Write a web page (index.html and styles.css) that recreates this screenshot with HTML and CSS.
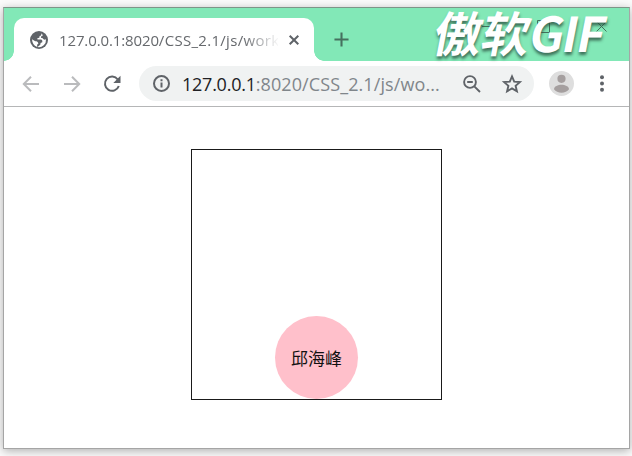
FILE: index.html
```html
<!DOCTYPE html>
<html lang="zh-CN">
<head>
<meta charset="utf-8">
<title>127.0.0.1:8020</title>
<link rel="stylesheet" href="styles.css">
</head>
<body>
<div class="window">
  <header class="tabs">
    <div class="tab">
      <svg class="globe" viewBox="0 0 18 18"><circle cx="9" cy="9" r="9" fill="#5f6368"/><path d="M11.200 2.200C11.600 3.800 11.200 4.800 9.600 5.100L9.300 6.800 7.300 7.200 7.500 8.600H10.900C12.200 8.800 12.500 9.800 12.300 11.200L10.600 12 10.300 13.800 7.500 16.100A7.200 7.200 0 0 0 16 8.300C14.800 9 13.300 8.800 12.700 7.300L10.900 6.800 11.300 5.300 13 4.300ZM2 8.200C2.200 12 3.700 14.500 7.200 15.900L7.100 13.800 8.400 12.600C8 10.800 7 10.200 5.200 10.200Z" fill="#fff"/></svg>
      <span class="title"><span class="host">127.0.0.1:8020</span>/CSS_2.1/js/work</span>
      <svg class="close" viewBox="0 0 10 10"><path d="M.7.7 9.3 9.3M9.3.7.7 9.3"/></svg>
    </div>
    <svg class="plus" viewBox="0 0 16 16"><path d="M8 .5v15M.5 8h15"/></svg>
    <svg class="controls" viewBox="0 0 130 20"><path d="M6 9.500h12M61.500 3.500h12v12h-12zM120.500 4.500l10 10M130.500 4.500l-10 10"/></svg>
    <div class="watermark"><span class="cjk">傲软</span><span class="gif">GIF</span></div>
  </header>
  <nav class="toolbar">
    <svg class="nav back" viewBox="0 0 16 16"><path d="M16 8H1.500M8 .8.8 8 8 15.200"/></svg>
    <svg class="nav forward" viewBox="0 0 16 16"><path d="M0 8h14.500M8 .8 15.200 8 8 15.200"/></svg>
    <svg class="reload" viewBox="0 0 18 18"><path class="arc" d="M14.800 4.500A7.100 7.100 0 1 0 15.800 11"/><path d="M17.500.8V8h-7.200z" fill="#5f6368"/></svg>
    <div class="address">
      <svg class="info" viewBox="0 0 17 17"><circle cx="8.500" cy="8.500" r="7.500"/><path d="M8.500 7.500v5M8.500 4.300v1.900"/></svg>
      <span class="url"><b>127.0.0.1</b>:8020/CSS_2.1/js/wo...</span>
      <svg class="lens" viewBox="0 0 18 18"><circle cx="7" cy="7" r="5.900"/><path d="M11.300 11.300 17 17M4.200 7h5.600"/></svg>
      <svg class="star" viewBox="0 0 20 20"><path d="M10 2.400 12.200 7.600 17.900 8.100 13.600 11.800 14.900 17.300 10 14.400 5.100 17.300 6.400 11.800 2.100 8.100 7.800 7.600Z"/></svg>
    </div>
    <svg class="avatar" viewBox="0 0 25 25"><circle cx="12.500" cy="12.500" r="12.500" fill="#dedede"/><circle cx="12.500" cy="7.800" r="4.100" fill="#a59f9f"/><path d="M5 18.200c0-3 4-4.500 7.500-4.500s7.500 1.500 7.500 4.500c-1.600 2.300-4.400 3.500-7.500 3.500S6.600 20.500 5 18.200Z" fill="#a59f9f"/></svg>
    <svg class="menu" viewBox="0 0 4 17"><circle cx="2" cy="2.200" r="2"/><circle cx="2" cy="8.500" r="2"/><circle cx="2" cy="14.800" r="2"/></svg>
  </nav>
  <main class="page">
    <div class="box"><div class="ball">邱海峰</div></div>
  </main>
</div>
</body>
</html>
```
FILE: styles.css
```css
* { box-sizing: border-box; }
body {
  margin: 0;
  padding: 7px 0 0 3px;
  height: 456px;
  overflow: hidden;
  background: #fbfbfb;
  font-family: "Open Sans", "Noto Sans", "Noto Sans CJK SC", sans-serif;
}
svg { display: block; flex: none; fill: none; stroke: none; overflow: visible; }
.window {
  width: 627px;
  height: 442px;
  border: 1px solid #a5a5a5;
  border-top-color: #7e9588;
  background: #fff;
  box-shadow: 0 2px 9px rgba(0, 0, 0, .3);
}
.tabs {
  position: relative;
  display: flex;
  height: 53px;
  padding: 10px 0 0 10px;
  background: #82e8b7;
}
.tab {
  position: relative;
  display: flex;
  align-items: center;
  width: 300px;
  height: 43px;
  padding: 0 15px 0 16px;
  border-radius: 10px 10px 0 0;
  background: #fff;
}
.tab::before, .tab::after {
  content: "";
  position: absolute;
  bottom: 0;
  width: 10px;
  height: 10px;
}
.tab::before { left: -10px; background: radial-gradient(circle at 0 0, transparent 9.500px, #fff 10px); }
.tab::after { right: -10px; background: radial-gradient(circle at 100% 0, transparent 9.500px, #fff 10px); }
.globe { width: 18px; height: 18px; }
.title {
  width: 219px;
  margin-left: 11px;
  white-space: nowrap;
  color: #66696d;
  font-size: 15px;
  line-height: 24px;
  letter-spacing: .3px;
  -webkit-mask-image: linear-gradient(90deg, #000 184px, transparent 221px);
  mask-image: linear-gradient(90deg, #000 184px, transparent 221px);
}
.host { letter-spacing: -.12px; }
.close { width: 10px; height: 10px; margin-left: 11px; stroke: #5f6368; stroke-width: 2; }
.plus { width: 15px; height: 15px; margin: 14px 0 0 20px; stroke: #46705f; stroke-width: 2.200; }
.controls { position: absolute; left: 472px; top: 9px; width: 130px; height: 20px; stroke: #45705c; stroke-width: 1; }
.watermark {
  position: absolute;
  left: 431px;
  top: -5px;
  display: flex;
  color: #fff;
  font: 700 48px/56px "Noto Sans CJK SC", sans-serif;
  white-space: nowrap;
  text-shadow: 1px 3px 3px rgba(40, 75, 60, .75);
  transform: skewX(-11deg);
}
.gif { letter-spacing: -1.500px; }
.toolbar {
  display: flex;
  align-items: center;
  height: 46px;
  padding-left: 19px;
  border-bottom: 1px solid #b5b6b7;
}
.nav { width: 16px; height: 16px; stroke: #babbbd; stroke-width: 2; }
.forward { margin-left: 25px; }
.reload { width: 18px; height: 18px; margin-left: 23px; }
.arc { stroke: #5f6368; stroke-width: 2; }
.address {
  display: flex;
  align-items: center;
  width: 395px;
  height: 35px;
  margin-left: 18px;
  padding-left: 14px;
  border-radius: 18px;
  background: #f0f2f2;
}
.info { width: 17px; height: 17px; stroke: #5f6368; stroke-width: 2; }
.url { width: 270px; margin-left: 12px; color: #80868b; font-size: 18px; line-height: 28px; letter-spacing: .1px; white-space: nowrap; }
.url b { color: #202124; font-weight: 400; letter-spacing: -.25px; }
.lens { width: 18px; height: 18px; margin-left: 11px; stroke: #5f6368; stroke-width: 1.900; }
.star { width: 20px; height: 20px; margin-left: 21px; stroke: #5f6368; stroke-width: 1.900; }
.avatar { width: 25px; height: 25px; margin-left: 15px; }
.menu { width: 4px; height: 17px; margin-left: 26px; fill: #5f6368; }
.page { display: flex; justify-content: center; padding-top: 42px; }
.box {
  display: flex;
  align-items: flex-end;
  justify-content: center;
  width: 251px;
  height: 251px;
  border: 1px solid #1a1a1a;
}
.ball {
  width: 83px;
  height: 83.500px;
  border-radius: 50%;
  background: #ffc0cb;
  color: #111;
  font: 400 17px/83px "Noto Sans CJK SC", sans-serif;
  text-align: center;
}
```
